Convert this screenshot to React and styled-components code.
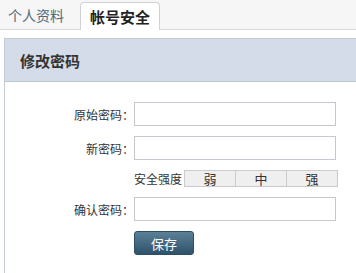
import React, { useState } from "react";
import styled, { createGlobalStyle } from "styled-components";

const GlobalStyle = createGlobalStyle`
  body {
    margin: 0;
    background: #fff;
    overflow: hidden;
    font-family: "Noto Sans CJK SC", "DejaVu Sans", sans-serif;
    color: #333;
  }
`;

const TabBar = styled.div`
  display: flex;
  align-items: flex-end;
  height: 29px;
  padding-left: 8px;
  background: #f6f6f6;
  border-bottom: 1px solid #d6d9dd;
`;

const Tab = styled.div`
  box-sizing: border-box;
  display: flex;
  align-items: center;
  justify-content: ${(p) => (p.$active ? "center" : "flex-start")};
  width: ${(p) => (p.$active ? "80px" : "72px")};
  height: ${(p) => (p.$active ? "28px" : "29px")};
  margin-bottom: ${(p) => (p.$active ? "-1px" : "0")};
  font-size: ${(p) => (p.$active ? "15px" : "14px")};
  font-weight: ${(p) => (p.$active ? 700 : 400)};
  color: ${(p) => (p.$active ? "#222" : "#4f6b7b")};
  background: ${(p) => (p.$active ? "#fff" : "transparent")};
  border: ${(p) => (p.$active ? "1px solid #cfd3d8" : "none")};
  border-bottom: none;
  border-radius: 4px 4px 0 0;
  cursor: pointer;
`;

const Panel = styled.div`
  margin: 8px 0 0 4px;
  height: 240px;
  border: 1px solid #c3cbd5;
  border-right: none;
`;

const PanelHead = styled.div`
  display: flex;
  align-items: center;
  height: 42px;
  padding-left: 15px;
  background: #d3dce8;
  border-bottom: 1px solid #bcc6d2;
  font-size: 15px;
  font-weight: 700;
  color: #333;
`;

const Form = styled.div`
  display: flex;
  flex-direction: column;
  gap: 10px;
  padding-top: 20px;
`;

const Row = styled.div`
  display: flex;
  align-items: center;
`;

const Label = styled.label`
  width: 129px;
  text-align: right;
  font-size: 12px;
  color: #333;
  white-space: nowrap;
`;

const Input = styled.input`
  box-sizing: border-box;
  width: 202px;
  height: 24px;
  margin: 0;
  padding: 0 4px;
  border: 1px solid #c4c8ce;
  outline: none;
  font-size: 12px;
`;

const StrengthText = styled.span`
  font-size: 12px;
  color: #333;
  margin-right: 2px;
  line-height: 17px;
`;

const Meter = styled.div`
  display: flex;
  box-sizing: border-box;
  height: 17px;
  border: 1px solid #cbcbcb;
  background: #efefef;
`;

const Cell = styled.div`
  width: 50px;
  text-align: center;
  font-size: 13px;
  line-height: 15px;
  color: #333;
  border-left: ${(p) => (p.$first ? "none" : "1px solid #cbcbcb")};
`;

const SaveButton = styled.button`
  box-sizing: border-box;
  width: 60px;
  height: 24px;
  margin: 0;
  padding: 0;
  border: 1px solid #2f4d62;
  border-radius: 3px;
  background: linear-gradient(to bottom, #5d8099, #2f526b);
  color: #fff;
  font-family: inherit;
  font-size: 13px;
  cursor: pointer;
`;

const App = () => {
  const [activeTab, setActiveTab] = useState("security");

  return (
    <>
      <GlobalStyle />
      <TabBar>
        <Tab $active={activeTab === "profile"} onClick={() => setActiveTab("profile")}>
          个人资料
        </Tab>
        <Tab $active={activeTab === "security"} onClick={() => setActiveTab("security")}>
          帐号安全
        </Tab>
      </TabBar>
      <Panel>
        <PanelHead>修改密码</PanelHead>
        <Form>
          <Row>
            <Label>原始密码：</Label>
            <Input type="password" />
          </Row>
          <Row>
            <Label>新密码：</Label>
            <Input type="password" />
          </Row>
          <Row>
            <Label />
            <StrengthText>安全强度</StrengthText>
            <Meter>
              <Cell $first>弱</Cell>
              <Cell>中</Cell>
              <Cell>强</Cell>
            </Meter>
          </Row>
          <Row>
            <Label>确认密码：</Label>
            <Input type="password" />
          </Row>
          <Row>
            <Label />
            <SaveButton>保存</SaveButton>
          </Row>
        </Form>
      </Panel>
    </>
  );
};

export default App;
